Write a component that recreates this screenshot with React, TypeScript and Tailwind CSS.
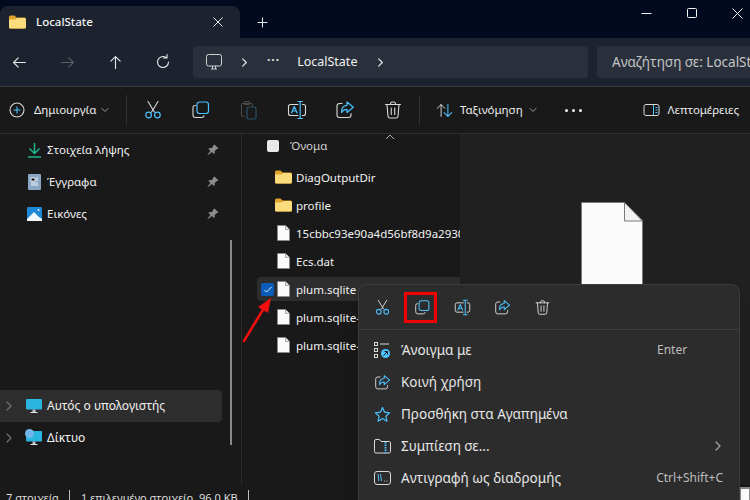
import type { ReactNode } from "react";

const BLUE = "#4cc2ff";

function Svg({ size = 20, children }: { size?: number; children: ReactNode }) {
  return (
    <svg width={size} height={size} viewBox="0 0 20 20" fill="none" strokeLinecap="round" strokeLinejoin="round" className="shrink-0">
      {children}
    </svg>
  );
}

function Cut({ size = 20 }: { size?: number }) {
  return (
    <Svg size={size}>
      <path d="M5 1.500 11.400 12M15 1.500 8.600 12" stroke="#d9d9d9" strokeWidth="1.100" />
      <circle cx="5.600" cy="15" r="2.800" stroke={BLUE} strokeWidth="1.200" />
      <circle cx="14.400" cy="15" r="2.800" stroke={BLUE} strokeWidth="1.200" />
    </Svg>
  );
}

function Copy({ size = 20 }: { size?: number }) {
  return (
    <Svg size={size}>
      <path d="M4.500 5.500H4a2 2 0 0 0-2 2V15a2.500 2.500 0 0 0 2.500 2.500H11a2 2 0 0 0 2-1.600" stroke="#d9d9d9" strokeWidth="1.100" />
      <rect x="6" y="2" width="11.500" height="11.500" rx="2.400" stroke={BLUE} strokeWidth="1.200" />
    </Svg>
  );
}

function Paste() {
  return (
    <Svg>
      <path d="M5 16.500H4A1.500 1.500 0 0 1 2.500 15V5A1.500 1.500 0 0 1 4 3.500h8A1.500 1.500 0 0 1 13.500 5v1" stroke="#4d4d4d" strokeWidth="1.100" />
      <rect x="5.500" y="1.500" width="5" height="3" rx="1" stroke="#4d4d4d" strokeWidth="1.100" />
      <rect x="8" y="7" width="9" height="12" rx="1.500" stroke="#2c5266" strokeWidth="1.200" />
    </Svg>
  );
}

function Rename({ size = 20 }: { size?: number }) {
  return (
    <Svg size={size}>
      <path d="M11 4.500H3.500a2 2 0 0 0-2 2v7a2 2 0 0 0 2 2H11M15.500 4.500h1a2 2 0 0 1 2 2v7a2 2 0 0 1-2 2h-1" stroke="#d9d9d9" strokeWidth="1.100" />
      <path d="M11 1.500h4.400M13.200 1.500v17M11 18.500h4.400" stroke={BLUE} strokeWidth="1.200" />
      <path d="m4.500 13 2.800-6.500 2.800 6.500M5.500 11h3.600" stroke={BLUE} strokeWidth="1.200" />
    </Svg>
  );
}

function Share({ size = 20 }: { size?: number }) {
  return (
    <Svg size={size}>
      <path d="M7 3.500H4.500A2.500 2.500 0 0 0 2 6v9a2.500 2.500 0 0 0 2.500 2.500h9A2.500 2.500 0 0 0 16 15v-1.500" stroke="#d9d9d9" strokeWidth="1.100" />
      <path d="M12 2v3.300C8.500 5.500 6.300 8 6.500 12.500 8 10 9.800 9.300 12 9.300v3.200l6.300-5.200z" stroke={BLUE} strokeWidth="1.200" />
    </Svg>
  );
}

function Trash({ size = 20 }: { size?: number }) {
  return (
    <Svg size={size}>
      <path d="M2.500 4.500h15M7.500 4.500v-.7A2 2 0 0 1 9.500 2h1a2 2 0 0 1 2 1.800v.7M4 4.500l1 11.700A2 2 0 0 0 7 18h6a2 2 0 0 0 2-1.800l1-11.700M8.300 8v6.500M11.700 8v6.500" stroke="#d9d9d9" strokeWidth="1.100" />
    </Svg>
  );
}

function Folder() {
  return (
    <svg width="17" height="14" viewBox="0 0 17 14" className="shrink-0">
      <path d="M0 2A1.500 1.500 0 0 1 1.500.5h4l2 2h8A1.500 1.500 0 0 1 17 4v8a1.500 1.500 0 0 1-1.500 1.500h-14A1.500 1.500 0 0 1 0 12z" fill="#e0a32c" />
      <path d="M0 4.500h6.500l2-1.500h7A1.500 1.500 0 0 1 17 4.500V12a1.500 1.500 0 0 1-1.500 1.500h-14A1.500 1.500 0 0 1 0 12z" fill="#fbdc7d" />
    </svg>
  );
}

function FileIcon() {
  return (
    <svg width="13" height="16" viewBox="0 0 13 16" className="shrink-0">
      <path d="M.5.500h8l4 4v11H.500z" fill="#fbfbfb" stroke="#8a8a8a" strokeWidth=".7" />
      <path d="M8.500.500v4h4" fill="#e8e8e8" stroke="#8a8a8a" strokeWidth=".7" />
    </svg>
  );
}

function Pin() {
  return (
    <svg width="12" height="12" viewBox="0 0 12 12" className="shrink-0">
      <path d="m7.500.500 4 4-1 .8-.8-.2-2 2 .1 2-.9.900-2-2L1 11l-.5-.5L3.400 7l-2-2 .9-.9 2 .1 2-2-.2-.8z" fill="#8c8c8c" />
    </svg>
  );
}

function Chevron({ color = "#6e6e6e", size = 10 }: { color?: string; size?: number }) {
  return (
    <svg width={size} height={size} viewBox="0 0 10 10" fill="none" className="shrink-0">
      <path d="m3 1 4 4-4 4" stroke={color} strokeWidth="1.300" strokeLinecap="round" strokeLinejoin="round" />
    </svg>
  );
}

function ChevronDown() {
  return (
    <svg width="8" height="8" viewBox="0 0 8 8" fill="none" className="shrink-0">
      <path d="m1 2.500 3 3 3-3" stroke="#9a9a9a" strokeWidth="1" strokeLinecap="round" strokeLinejoin="round" />
    </svg>
  );
}

function Monitor({ size = 16 }: { size?: number }) {
  return (
    <svg width={size} height={size} viewBox="0 0 16 16" className="shrink-0">
      <rect x="0" y="1" width="16" height="10.500" rx=".8" fill="#29b5e0" />
      <rect x="6.500" y="11.500" width="3" height="2.500" fill="#b9c4cc" />
      <rect x="4.500" y="14" width="7" height="1" fill="#e2e6ea" />
    </svg>
  );
}

function NavRow({ icon, label, pin }: { icon: ReactNode; label: string; pin?: boolean }) {
  return (
    <div className="h-8 flex items-center pl-[26px] pr-[22px]">
      <div className="w-[17px] flex justify-center shrink-0">{icon}</div>
      <span className="ml-1 flex-1 text-[11.5px] text-[#f2f2f2]">{label}</span>
      {pin && <Pin />}
    </div>
  );
}

function FileRow({ name, folder, selected }: { name: string; folder?: boolean; selected?: boolean }) {
  return (
    <div className="h-7 flex items-center">
      <div className={`flex items-center w-full h-6 pl-[18px] rounded-l ${selected ? "bg-[#2d2d2d]" : ""}`}>
        <div className="w-[17px] flex justify-center shrink-0">{folder ? <Folder /> : <FileIcon />}</div>
        <span className="ml-1 pt-[2px] text-[11.5px] text-[#f2f2f2] whitespace-nowrap overflow-hidden">{name}</span>
      </div>
    </div>
  );
}

function MenuRow({ icon, label, right }: { icon: ReactNode; label: string; right?: ReactNode }) {
  return (
    <div className="h-8 flex items-center pl-[14px] pr-[16px]">
      <div className="w-[18px] flex justify-center shrink-0">{icon}</div>
      <span className="ml-[10px] flex-1 text-[13.5px] text-[#e6e6e6]">{label}</span>
      {right}
    </div>
  );
}

export default function App() {
  return (
    <div className="relative w-[750px] h-[500px] overflow-hidden bg-[#191919] flex flex-col font-['Noto_Sans','Open_Sans',sans-serif] text-white">
      {/* title bar */}
      <div className="h-[38px] bg-[#010a1f] flex items-end shrink-0">
        <div className="w-[240px] h-8 bg-[#1c232e] rounded-t-lg flex items-center pl-[9px] pr-[17px]">
          <Folder />
          <span className="ml-[10px] flex-1 text-[11.5px] font-medium text-[#f2f2f2]">LocalState</span>
          <svg width="10" height="10" viewBox="0 0 10 10" stroke="#e8e8e8" strokeWidth="1"><path d="m.5.500 9 9m0-9-9 9" /></svg>
        </div>
        <div className="h-8 flex items-center ml-[17px]">
          <svg width="11" height="11" viewBox="0 0 11 11" stroke="#e8e8e8" strokeWidth="1"><path d="M5.500.500v10M.500 5.500h10" /></svg>
        </div>
        <div className="ml-auto -mr-[10px] h-[38px] flex items-start">
          <div className="w-[45px] h-[26px] flex items-center justify-center">
            <svg width="11" height="11" viewBox="0 0 11 11" stroke="#f2f2f2" strokeWidth="1"><path d="M.500 5.500h10" /></svg>
          </div>
          <div className="w-[45px] h-[26px] flex items-center justify-center">
            <svg width="10" height="10" viewBox="0 0 10 10" stroke="#f2f2f2" fill="none" strokeWidth="1"><rect x=".5" y=".5" width="9" height="9" rx="1" /></svg>
          </div>
          <div className="w-[46px] h-[26px] flex items-center justify-center">
            <svg width="11" height="11" viewBox="0 0 11 11" stroke="#f2f2f2" strokeWidth="1"><path d="m.500.500 10 10m0-10-10 10" /></svg>
          </div>
        </div>
      </div>

      {/* nav bar */}
      <div className="h-[49px] bg-[#1c232e] border-b border-[#3d3d3d] flex items-center shrink-0">
        <div className="flex items-center pl-[7px] gap-6">
          <div className="w-6 flex justify-center"><Svg size={17}><path d="M3 10h14M8.500 4.500 3 10l5.500 5.500" stroke="#e8e8e8" strokeWidth="1.300" /></Svg></div>
          <div className="w-6 flex justify-center"><Svg size={17}><path d="M3 10h14M11.500 4.500 17 10l-5.500 5.500" stroke="#5a5f66" strokeWidth="1.300" /></Svg></div>
          <div className="w-6 flex justify-center"><Svg size={17}><path d="M10 3v14M4.500 8.500 10 3l5.500 5.500" stroke="#e8e8e8" strokeWidth="1.300" /></Svg></div>
          <div className="w-6 flex justify-center"><Svg size={20}><path d="M15.500 10a5.500 5.500 0 1 1-2.200-4.400M14 2.500V6h-3.500" stroke="#e8e8e8" strokeWidth="1.100" /></Svg></div>
        </div>
        <div className="ml-[18px] w-[395px] h-8 bg-[#2a303b] rounded flex items-center pl-[13px]">
          <svg width="16" height="16" viewBox="0 0 16 16" fill="none" stroke="#d0d0d0" strokeWidth="1"><rect x=".5" y=".5" width="15" height="11.500" rx="2" /><path d="M5 15h6M6.500 12v3M9.500 12v3" /></svg>
          <div className="ml-[18px]"><Chevron color="#e8e8e8" size={9} /></div>
          <span className="ml-[18px] text-[12px] font-bold tracking-[1px] leading-none text-[#e8e8e8] -mt-1">···</span>
          <span className="ml-[17px] text-[12.5px] text-[#f0f0f0]">LocalState</span>
          <div className="ml-[19px]"><Chevron color="#e8e8e8" size={9} /></div>
        </div>
        <div className="ml-[9px] flex-1 h-8 bg-[#2a303b] rounded-l flex items-center pl-[15px] overflow-hidden">
          <span className="text-[13.5px] text-[#c4c4c4] whitespace-nowrap">Αναζήτηση σε: LocalState</span>
        </div>
      </div>

      {/* command bar */}
      <div className="h-[47px] border-b border-[#2e2e2e] flex items-center shrink-0 bg-[#191919]">
        <div className="flex items-center pl-[9px] w-[126px]">
          <svg width="16" height="16" viewBox="0 0 16 16" fill="none" strokeWidth="1.100"><circle cx="8" cy="8" r="7" stroke="#d9d9d9" /><path d="M8 4.500v7M4.500 8h7" stroke={BLUE} /></svg>
          <span className="ml-[9px] text-[11.5px] text-[#ededed]">Δημιουργία</span>
          <div className="ml-[5px]"><ChevronDown /></div>
        </div>
        <div className="w-px h-[30px] bg-[#333333]" />
        <div className="flex ml-[2px]">
          <div className="w-12 flex justify-center"><Cut /></div>
          <div className="w-12 flex justify-center"><Copy /></div>
          <div className="w-12 flex justify-center"><Paste /></div>
          <div className="w-12 flex justify-center"><Rename /></div>
          <div className="w-12 flex justify-center"><Share /></div>
          <div className="w-12 flex justify-center"><Trash /></div>
        </div>
        <div className="w-px h-[30px] bg-[#333333] ml-[2px]" />
        <div className="ml-[16px]">
          <Svg size={17}>
            <path d="M6 17V3M1.500 7.500 6 3l4.500 4.500" stroke="#d9d9d9" strokeWidth="1.100" />
            <path d="M14 3v14M9.500 12.500 14 17l4.500-4.500" stroke={BLUE} strokeWidth="1.200" />
          </Svg>
        </div>
        <span className="ml-[7px] text-[11.5px] text-[#ededed]">Ταξινόμηση</span>
        <div className="ml-[6px]"><ChevronDown /></div>
        <div className="ml-[28px] flex gap-[4px]">
          <span className="w-[3px] h-[3px] rounded-full bg-[#f0f0f0]" />
          <span className="w-[3px] h-[3px] rounded-full bg-[#f0f0f0]" />
          <span className="w-[3px] h-[3px] rounded-full bg-[#f0f0f0]" />
        </div>
        <div className="ml-auto flex items-center pr-[11px]">
          <svg width="17" height="14" viewBox="0 0 16 14" fill="none" strokeWidth="1"><rect x=".5" y="1.500" width="15" height="11" rx="2" stroke="#d9d9d9" /><path d="M10 2v10M12 4.500h2M12 7h2M12 9.500h2" stroke={BLUE} /></svg>
          <span className="ml-[8px] text-[11.5px] text-[#ededed]">Λεπτομέρειες</span>
        </div>
      </div>

      {/* body */}
      <div className="flex-1 flex min-h-0">
        <aside className="relative w-[242px] border-r border-[#2a2a2a] shrink-0 flex flex-col">
          <NavRow
            label="Στοιχεία λήψης"
            pin
            icon={
              <svg width="13" height="15" viewBox="0 0 13 15" fill="none" stroke="#1fb590" strokeWidth="1.500"><path d="M6.500 0v10M1.500 5.500l5 5 5-5" /><path d="M0 14h13" /></svg>
            }
          />
          <NavRow
            label="Έγγραφα"
            pin
            icon={
              <svg width="13" height="16" viewBox="0 0 13 16"><rect width="13" height="16" rx="1" fill="#8ca6c6" /><path d="M3 4h4v3H3zM8 4h2M8 6h2M3 9h7M3 11h7" stroke="#eef2f7" strokeWidth="1" /></svg>
            }
          />
          <NavRow
            label="Εικόνες"
            pin
            icon={
              <svg width="15" height="14" viewBox="0 0 15 14"><rect width="15" height="14" rx="1" fill="#1d87d8" /><path d="M0 12 7 5l5 5 3 2v2H0z" fill="#f4f8fc" /><circle cx="11.500" cy="3" r="1" fill="#f4f8fc" /></svg>
            }
          />
          <div className="mt-[160px] h-8 mr-[19px] bg-[#2d2d2d] rounded-r flex items-center pl-1">
            <Chevron />
            <div className="ml-[12px]"><Monitor /></div>
            <span className="ml-[5px] text-[12px] text-[#f2f2f2]">Αυτός ο υπολογιστής</span>
          </div>
          <div className="h-8 flex items-center pl-1">
            <Chevron />
            <div className="ml-[12px] relative">
              <Monitor />
              <span className="absolute -left-[1px] -top-[1px] w-[9px] h-[9px] rounded-full bg-[#6fb7e8]" />
            </div>
            <span className="ml-[5px] text-[12px] text-[#f2f2f2]">Δίκτυο</span>
          </div>
          <div className="absolute left-[230px] top-[106px] w-[2px] h-[205px] bg-[#8a8a8a]" />
        </aside>

        <main className="relative w-[218px] shrink-0 flex flex-col">
          <div className="h-[29px] flex items-center pb-[5px] pl-[25px]">
            <div className="w-[12px] h-[12px] rounded-[2px] bg-[#e8e8e8]" />
            <span className="ml-[11px] text-[11.5px] text-[#d0d0d0]">Όνομα</span>
          </div>
          <div className="pl-[15px]">
            <FileRow name="DiagOutputDir" folder />
            <FileRow name="profile" folder />
            <FileRow name="15cbbc93e90a4d56bf8d9a293059f1c4" />
            <FileRow name="Ecs.dat" />
            <FileRow name="plum.sqlite" selected />
            <FileRow name="plum.sqlite-shm" />
            <FileRow name="plum.sqlite-wal" />
          </div>
          <svg className="absolute left-[143px] top-[0px]" width="10" height="6" viewBox="0 0 10 6" fill="none" stroke="#b0b0b0"><path d="m1 5 4-4 4 4" /></svg>
          <div className="absolute left-[19px] top-[149px] w-[13px] h-[13px] bg-[#0a5cb8] rounded-[2px] flex items-center justify-center">
            <svg width="8" height="7" viewBox="0 0 8 7" fill="none" stroke="#e8f0fa"><path d="m.5 4 2 2 5-5" /></svg>
          </div>
        </main>

        <section className="flex-1 bg-[#202020] flex justify-center pt-[68px] pl-[14px]">
          <svg width="62" height="90" viewBox="0 0 62 90" className="shrink-0">
            <path d="M.5.500h43l18 18.500v70.500H.500z" fill="#fbfbfb" stroke="#7a7a7a" />
            <path d="M43.500.500V19h18z" fill="#f2f2f2" stroke="#7a7a7a" />
          </svg>
        </section>
      </div>

      {/* status bar */}
      <div className="h-[15px] shrink-0 flex items-start bg-[#191919] pl-[6px] overflow-hidden">
        <span className="pt-[4px] text-[11px] leading-[17px] text-[#dcdcdc] whitespace-nowrap">7 στοιχεία</span>
        <span className="w-px h-[12px] bg-[#bdbdbd] ml-[10px] mt-[5px]" />
        <span className="ml-[11px] pt-[4px] text-[11px] leading-[17px] text-[#dcdcdc] whitespace-nowrap">1 επιλεγμένο στοιχείο, 96,0 KB</span>
        <span className="w-px h-[12px] bg-[#bdbdbd] ml-[10px] mt-[5px]" />
        <span className="ml-auto mt-[2px] w-[10px] h-[14px] border border-t-2 border-[#8a8a8a] bg-white" />
      </div>

      {/* annotation arrow */}
      <svg className="absolute left-[240px] top-[296px]" width="36" height="50" viewBox="0 0 36 50" fill="none">
        <path d="M4 45 24 12" stroke="#f40f0f" strokeWidth="2.500" strokeLinecap="round" />
        <path d="M31 2 18 11l10 6z" fill="#f40f0f" />
      </svg>

      {/* context menu */}
      <div className="absolute left-[358px] top-[284px] w-[382px] h-[230px] bg-[#2c2c2c] border border-[#3c3c3c] rounded-lg shadow-xl">
        <div className="relative h-[45px] flex items-center pl-[3px] border-b border-[#3d3d3d]">
          <div className="w-10 flex justify-center"><Cut size={17} /></div>
          <div className="w-10 flex justify-center"><Copy size={17} /></div>
          <div className="w-10 flex justify-center"><Rename size={17} /></div>
          <div className="w-10 flex justify-center"><Share size={17} /></div>
          <div className="w-10 flex justify-center"><Trash size={17} /></div>
          <div className="absolute left-[45px] top-[7px] w-[33px] h-[31px] border-[3px] border-[#f40000]" />
        </div>
        <div className="pt-[4px]">
          <MenuRow
            label="Άνοιγμα με"
            right={<span className="w-[66px] text-[12px] text-[#bdbdbd]">Enter</span>}
            icon={
              <svg width="16" height="16" viewBox="0 0 16 16" fill="none" stroke="#d9d9d9" strokeWidth="1"><rect x=".5" y=".5" width="3" height="3" /><rect x=".5" y="6.500" width="3" height="3" /><rect x=".5" y="12.500" width="3" height="3" /><path d="M6 2h9" /><circle cx="11.500" cy="11.500" r="4.500" fill={BLUE} stroke="none" /><path d="M9.500 13.500l4-4M10.500 9.500h3v3" stroke="#1c1c1c" /></svg>
            }
          />
          <MenuRow label="Κοινή χρήση" icon={<Share size={17} />} />
          <MenuRow
            label="Προσθήκη στα Αγαπημένα"
            icon={
              <svg width="17" height="17" viewBox="0 0 17 17" fill="none" stroke={BLUE} strokeWidth="1.200" strokeLinejoin="round"><path d="m8.500 1.500 2.100 4.700 5 .6-3.700 3.400 1 5-4.400-2.600-4.400 2.600 1-5L1.400 6.800l5-.6z" /></svg>
            }
          />
          <MenuRow
            label="Συμπίεση σε..."
            right={<Chevron color="#a0a0a0" size={10} />}
            icon={
              <svg width="17" height="15" viewBox="0 0 17 15" fill="none" strokeWidth="1"><path d="M.5 12.500V2A1.500 1.500 0 0 1 2 .5h3.500l1.500 2h8.500A1.500 1.500 0 0 1 16.500 4v8.500A1.500 1.500 0 0 1 15 14H2a1.500 1.500 0 0 1-1.500-1.500z" stroke="#d9d9d9" /><path d="M11.500 3v11" stroke={BLUE} strokeWidth="2" strokeDasharray="1.500 1" /></svg>
            }
          />
          <MenuRow
            label="Αντιγραφή ως διαδρομής"
            right={<span className="text-[12px] text-[#bdbdbd]">Ctrl+Shift+C</span>}
            icon={
              <svg width="17" height="14" viewBox="0 0 17 14" fill="none" strokeWidth="1"><rect x=".5" y=".5" width="16" height="13" rx="2.500" stroke="#d9d9d9" /><path d="M4 3l1 7M6.500 3l1 7" stroke={BLUE} /><path d="M10 10h.8M12.500 10h.8" stroke="#d9d9d9" /></svg>
            }
          />
        </div>
      </div>
    </div>
  );
}
